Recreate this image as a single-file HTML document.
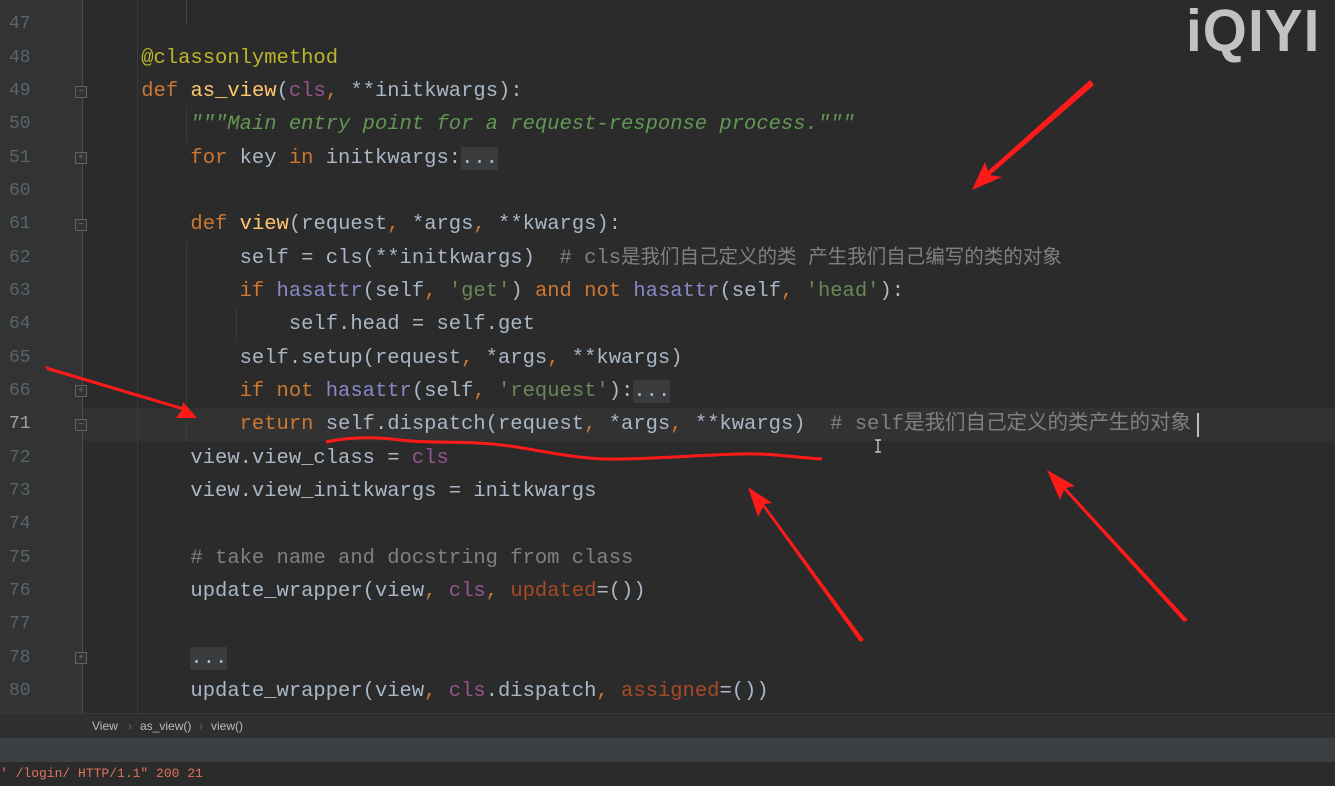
<!DOCTYPE html>
<html><head><meta charset="utf-8"><style>
body{margin:0;width:1335px;height:783px;overflow:hidden;background:#2b2b2b;position:relative;font-family:"Liberation Mono","Noto Sans CJK SC",monospace;}
#gut{position:absolute;left:0;top:0;width:82px;height:713px;background:#313335;}
#foldline{position:absolute;left:82px;top:0;width:1px;height:713px;background:#4a4c4e;}
.ln{position:absolute;left:9px;width:40px;height:33px;line-height:33px;font-size:18px;color:#5e6366;}
.row{position:absolute;left:92px;height:33px;line-height:33px;font-size:20.5px;color:#a9b7c6;white-space:pre;}
.k{color:#cc7832}.f{color:#ffc66d}.c{color:#94558d}.s{color:#6a8759}.d{color:#629755;font-style:italic}.cm{color:#808080}.dec{color:#bbb529}.b{color:#8888c6}.p{color:#aa4926}
.fold{position:absolute;left:75px;width:12px;height:12px;border:1px solid #5e6366;box-sizing:border-box;background:#313335;color:#6b6f72;font-size:10px;line-height:10px;text-align:center;font-family:"Liberation Sans",sans-serif}
.guide{position:absolute;width:1px;background:#3b3b3b}
.dots{background:#3a3b3c;color:#a9b7c6}
</style></head><body>
<div id="gut"></div><div id="foldline"></div>
<div style="position:absolute;left:83px;top:408px;width:1252px;height:33px;background:#323232"></div>
<div class="guide" style="left:137px;top:0;height:713px"></div>
<div class="guide" style="left:186px;top:0;height:25px;background:#444"></div>
<div class="guide" style="left:186px;top:108px;height:34px"></div>
<div class="guide" style="left:186px;top:241px;height:200px"></div>
<div class="guide" style="left:236px;top:308px;height:34px"></div>

<div class="row" style="top:-25px">            (self, ...)</div>
<div class="ln" style="top:8px">47</div>
<div class="ln" style="top:42px">48</div><div class="row" style="top:42px"><span class="dec">    @classonlymethod</span></div>
<div class="ln" style="top:75px">49</div><div class="row" style="top:75px">    <span class="k">def</span> <span class="f">as_view</span>(<span class="c">cls</span><span class="k">,</span> **initkwargs):</div>
<div class="ln" style="top:108px">50</div><div class="row" style="top:108px">        <span class="d">"""Main entry point for a request-response process."""</span></div>
<div class="ln" style="top:142px">51</div><div class="row" style="top:142px">        <span class="k">for</span> key <span class="k">in</span> initkwargs:<span class="dots">...</span></div>
<div class="ln" style="top:175px">60</div>
<div class="ln" style="top:208px">61</div><div class="row" style="top:208px">        <span class="k">def</span> <span class="f">view</span>(request<span class="k">,</span> *args<span class="k">,</span> **kwargs):</div>
<div class="ln" style="top:242px">62</div><div class="row" style="top:242px">            self = cls(**initkwargs)  <span class="cm"># cls<span style="font-size:19.5px">是我们自己定义的类 产生我们自己编写的类的对象</span></span></div>
<div class="ln" style="top:275px">63</div><div class="row" style="top:275px">            <span class="k">if</span> <span class="b">hasattr</span>(self<span class="k">,</span> <span class="s">'get'</span>) <span class="k">and not</span> <span class="b">hasattr</span>(self<span class="k">,</span> <span class="s">'head'</span>):</div>
<div class="ln" style="top:308px">64</div><div class="row" style="top:308px">                self.head = self.get</div>
<div class="ln" style="top:342px">65</div><div class="row" style="top:342px">            self.setup(request<span class="k">,</span> *args<span class="k">,</span> **kwargs)</div>
<div class="ln" style="top:375px">66</div><div class="row" style="top:375px">            <span class="k">if not</span> <span class="b">hasattr</span>(self<span class="k">,</span> <span class="s">'request'</span>):<span class="dots">...</span></div>
<div class="ln" style="top:408px;color:#a4a3a3">71</div><div class="row" style="top:408px">            <span class="k">return</span> self.dispatch(request<span class="k">,</span> *args<span class="k">,</span> **kwargs)  <span class="cm"># self是我们自己定义的类产生的对象</span></div>
<div style="position:absolute;left:1197px;top:413px;width:2px;height:24px;background:#bbb"></div>
<div class="ln" style="top:442px">72</div><div class="row" style="top:442px">        view.view_class = <span class="c">cls</span></div>
<div class="ln" style="top:475px">73</div><div class="row" style="top:475px">        view.view_initkwargs = initkwargs</div>
<div class="ln" style="top:508px">74</div>
<div class="ln" style="top:542px">75</div><div class="row" style="top:542px">        <span class="cm"># take name and docstring from class</span></div>
<div class="ln" style="top:575px">76</div><div class="row" style="top:575px">        update_wrapper(view<span class="k">,</span> <span class="c">cls</span><span class="k">,</span> <span class="p">updated</span>=())</div>
<div class="ln" style="top:608px">77</div>
<div class="ln" style="top:642px">78</div><div class="row" style="top:642px">        <span class="dots">...</span></div>
<div class="ln" style="top:675px">80</div><div class="row" style="top:675px">        update_wrapper(view<span class="k">,</span> <span class="c">cls</span>.dispatch<span class="k">,</span> <span class="p">assigned</span>=())</div>

<div class="fold" style="top:86px">−</div>
<div class="fold" style="top:152px">+</div>
<div class="fold" style="top:219px">−</div>
<div class="fold" style="top:385px">+</div>
<div class="fold" style="top:419px">−</div>
<div class="fold" style="top:652px">+</div>

<div style="position:absolute;left:0;top:713px;width:1335px;height:25px;background:#2d2f31;border-top:1px solid #3a3a3a;font-family:'Liberation Sans',sans-serif;font-size:12px;color:#b9bcbe;line-height:25px">
<span style="position:absolute;left:92px">View</span><span style="position:absolute;left:128px;color:#666">›</span><span style="position:absolute;left:140px">as_view()</span><span style="position:absolute;left:199px;color:#666">›</span><span style="position:absolute;left:211px">view()</span></div>
<div style="position:absolute;left:0;top:738px;width:1335px;height:24px;background:#3c3f41"></div>
<div style="position:absolute;left:0;top:762px;width:1335px;height:21px;background:#2b2b2b;font-size:13px;line-height:24px;color:#e0725c;white-space:pre">' /login/ HTTP/1.1" 200 21</div>

<div style="position:absolute;left:1186px;top:-2px;font-family:'Liberation Sans',sans-serif;font-weight:bold;font-size:54px;color:#c2c2c2;letter-spacing:1px;line-height:60px;transform:scale(1.05,1.1);transform-origin:left top">iQIYI</div>

<svg style="position:absolute;left:0;top:0" width="1335" height="783">
<g fill="#ff1a1a">
<polygon points="1090,80 1094,85 990,175 1002,177 972,190 985,162 988,171"/>
<polygon points="45,366 47,370 182,410 176,418 197,418 183,402 182,407"/>
<polygon points="864,640 860,642 763,507 758,517 748,487 772,503 764,504"/>
<polygon points="1188,620 1184,622 1064,490 1060,500 1047,470 1075,486 1066,488"/>
</g>
<path d="M326,442 C345,438 370,436 400,440 C430,444 470,440 510,446 C550,452 580,460 620,459 C670,458 700,455 740,454 C770,453 790,457 822,459" stroke="#ff1a1a" stroke-width="3" fill="none"/>
<path d="M875,440 h6 M878,440 v12 M875,452 h6" stroke="#ddd" stroke-width="1.2" fill="none"/>
</svg>
</body></html>
